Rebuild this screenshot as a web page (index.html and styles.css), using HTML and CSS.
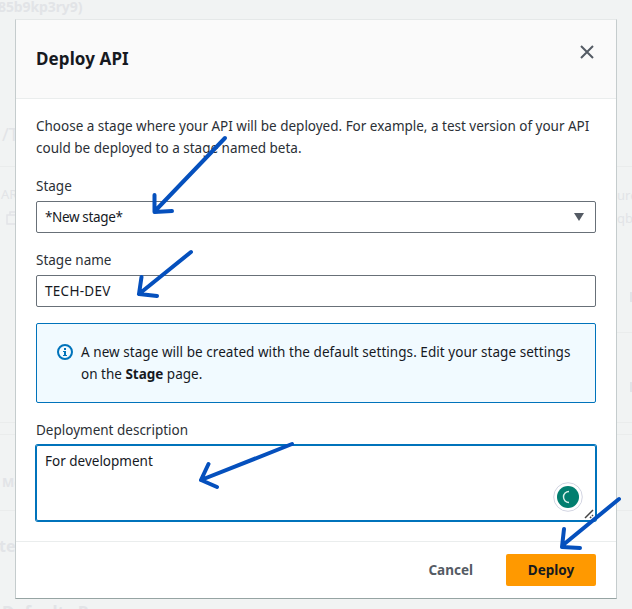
FILE: index.html
```html
<!DOCTYPE html>
<html lang="en">
<head>
<meta charset="utf-8">
<title>Deploy API</title>
<link rel="stylesheet" href="styles.css">
</head>
<body>
<div class="backdrop" aria-hidden="true">
  <span class="ghost ghost-id">85b9kp3ry9)</span>
  <span class="ghost ghost-path">/T</span>
  <span class="ghost ghost-arn">AR</span>
  <svg class="ghost-copy" width="12" height="14" viewBox="0 0 12 14" fill="none" stroke="currentColor" stroke-width="1.5"><path d="M4 4V1h9M1 4h10v9H1z"/></svg>
  <span class="ghost ghost-res">ure</span>
  <span class="ghost ghost-qb">qb</span>
  <span class="ghost ghost-method">Me</span>
  <span class="ghost ghost-te">te</span>
  <span class="ghost ghost-default">Defaults Re</span>
  <i class="rule rule-a"></i><i class="rule rule-b"></i><i class="rule rule-c"></i><i class="rule rule-d"></i><i class="rule rule-e"></i>
  <i class="chip chip-a"></i><i class="chip chip-b"></i>
</div>
<main class="modal">
  <header class="modal-header">
    <h1>Deploy API</h1>
    <svg class="close" width="16" height="16" viewBox="0 0 16 16"><path d="M2 2l12 12M14 2L2 14"/></svg>
  </header>
  <section class="modal-body">
    <p class="intro"><span class="intro-first">Choose a stage where your API will be deployed. For example, a test version of your API</span><br><span class="intro-second">could be deployed to a stage named beta.</span></p>
    <div class="field">
      <div class="label">Stage</div>
      <div class="control"><span class="value-stage">*New stage*</span><svg class="caret" width="12" height="10" viewBox="0 0 12 10"><path d="M1 1h10L6 9z"/></svg></div>
    </div>
    <div class="field">
      <div class="label">Stage name</div>
      <div class="control"><span class="value-name">TECH-DEV</span></div>
    </div>
    <div class="alert">
      <svg class="info" width="16" height="16" viewBox="0 0 16 16"><circle cx="8" cy="8" r="7"/><path class="glyph" d="M7 4h2v2H7zM6 7h3v4h1v1H6v-1h1V8H6z"/></svg>
      <p><span class="alert-first">A new stage will be created with the default settings. Edit your stage settings</span><br><span>on the <b>Stage</b> page.</span></p>
    </div>
    <div class="field">
      <div class="label">Deployment description</div>
      <div class="textarea"><span>For development</span>
        <svg class="checker" width="30" height="30" viewBox="0 0 30 30"><circle cx="15" cy="15" r="14.300" fill="#fff" stroke="#d3d5e2"/><circle cx="15" cy="15" r="11" fill="#027e6f"/><path d="M16 9.500a5.500 5.500 0 1 0 0 11" fill="none" stroke="#d9f0ea" stroke-width="1.400"/></svg>
        <svg class="grip" width="10" height="10" viewBox="0 0 10 10"><path d="M1 9L9 1M6 9l1.200-1.200M8 7l1-1" fill="none" stroke="#444" stroke-width="1.500"/></svg>
      </div>
    </div>
  </section>
  <footer class="modal-footer">
    <span class="cancel">Cancel</span>
    <span class="deploy">Deploy</span>
  </footer>
</main>
<svg class="arrows" width="632" height="609" viewBox="0 0 632 609">
  <path d="M225 138L155 211M154.500 195V212L172 211"/>
  <path d="M191 252L139 294M141.500 277L139 294L157 296"/>
  <path d="M292 444L201 480M208.500 464L201 480L217 487"/>
  <path d="M619 499L563 545M564 529L562 547L580 548"/>
</svg>
</body>
</html>
```
FILE: styles.css
```css
* { box-sizing: border-box; }
body {
  margin: 0;
  width: 632px;
  height: 609px;
  overflow: hidden;
  position: relative;
  background: #f1f3f3;
  color: #16191f;
  font: 13.5px/22px "Noto Sans", "Open Sans", sans-serif;
  padding: 19px 15px 0;
}
h1, p { margin: 0; }
span { white-space: nowrap; }
.backdrop { position: absolute; inset: 0; overflow: hidden; color: #e2e4e7; }
.ghost { position: absolute; }
.ghost-id { left: -2px; top: -4px; font-weight: 700; font-size: 14px; letter-spacing: -0.1px; }
.ghost-path { left: 2px; top: 123px; font-size: 18px; }
.ghost-arn { left: 1px; top: 183px; font-size: 13px; }
.ghost-copy { position: absolute; left: 6px; top: 211px; }
.ghost-res { left: 617px; top: 184px; font-size: 13px; }
.ghost-qb { left: 617px; top: 207px; font-size: 13px; }
.ghost-method { left: 2px; top: 471px; font-weight: 700; font-size: 13px; }
.ghost-te { left: -1px; top: 535px; font-weight: 700; font-size: 16px; }
.ghost-default { left: 2px; top: 602px; font-weight: 700; font-size: 17px; }
.rule { position: absolute; left: 0; right: 0; height: 1px; background: #eaecec; }
.rule-a { top: 166px; }
.rule-b { top: 422px; }
.rule-c { top: 434px; }
.rule-d { top: 510px; }
.rule-e { top: 332px; left: 617px; }
.chip { position: absolute; left: 630px; width: 2px; height: 10px; background: #e1e4e8; }
.chip-a { top: 292px; }
.chip-b { top: 382px; }
.modal {
  position: relative;
  width: 602px;
  height: 580px;
  background: #fff;
  border: 1px solid #c5cccd;
  border-top-color: #e5e8e8;
  border-bottom-color: #96a4a3;
}
.modal-header {
  display: flex;
  justify-content: space-between;
  height: 79px;
  padding: 24px 21px 0 20px;
  background: #fafafa;
  border-bottom: 1px solid #eaeded;
}
h1 { font-size: 17px; line-height: 30px; font-weight: 700; letter-spacing: 0.1px; }
.close { fill: none; stroke: #545b64; stroke-width: 2; }
.modal-body { height: 443px; padding: 16px 20px 0; border-bottom: 1px solid #eaeded; }
.intro { margin-bottom: 16px; color: #2b3036; }
.intro-first { letter-spacing: -0.01px; }
.field { margin-bottom: 16px; }
.label { height: 26px; color: #2b3036; }
.control {
  display: flex;
  align-items: center;
  justify-content: space-between;
  height: 32px;
  padding: 0 10px 0 8px;
  border: 1px solid #687078;
  border-radius: 2px;
}
.value-stage { letter-spacing: -0.36px; }
.value-name { letter-spacing: 0.28px; }
.caret { fill: #545b64; }
.alert {
  display: flex;
  gap: 8px;
  height: 80px;
  margin-bottom: 16px;
  padding: 17px 20px;
  background: #f1faff;
  border: 1px solid #0073bb;
  border-radius: 2px;
}
.alert-first { letter-spacing: 0.05px; }
.info { margin-top: 3px; flex: none; fill: none; stroke: #0073bb; stroke-width: 2; }
.glyph { fill: #0073bb; stroke: none; }
.textarea {
  position: relative;
  height: 76px;
  padding: 4px 8px;
  border: 1px solid #0073bb;
  border-radius: 2px;
  box-shadow: 0 0 0 1px #0073bb;
}
.checker { position: absolute; right: 12px; bottom: 8px; }
.grip { position: absolute; right: 1px; bottom: 1px; }
.modal-footer {
  display: flex;
  justify-content: flex-end;
  align-items: center;
  gap: 33px;
  height: 56px;
  padding-right: 20px;
  font-weight: 700;
}
.cancel { color: #545b64; }
.deploy { width: 90px; height: 32px; line-height: 32px; text-align: center; background: #f90; border-radius: 2px; }
.arrows { position: absolute; left: 0; top: 0; fill: none; stroke: #0550bd; stroke-width: 4; stroke-linecap: round; stroke-linejoin: round; }
```
